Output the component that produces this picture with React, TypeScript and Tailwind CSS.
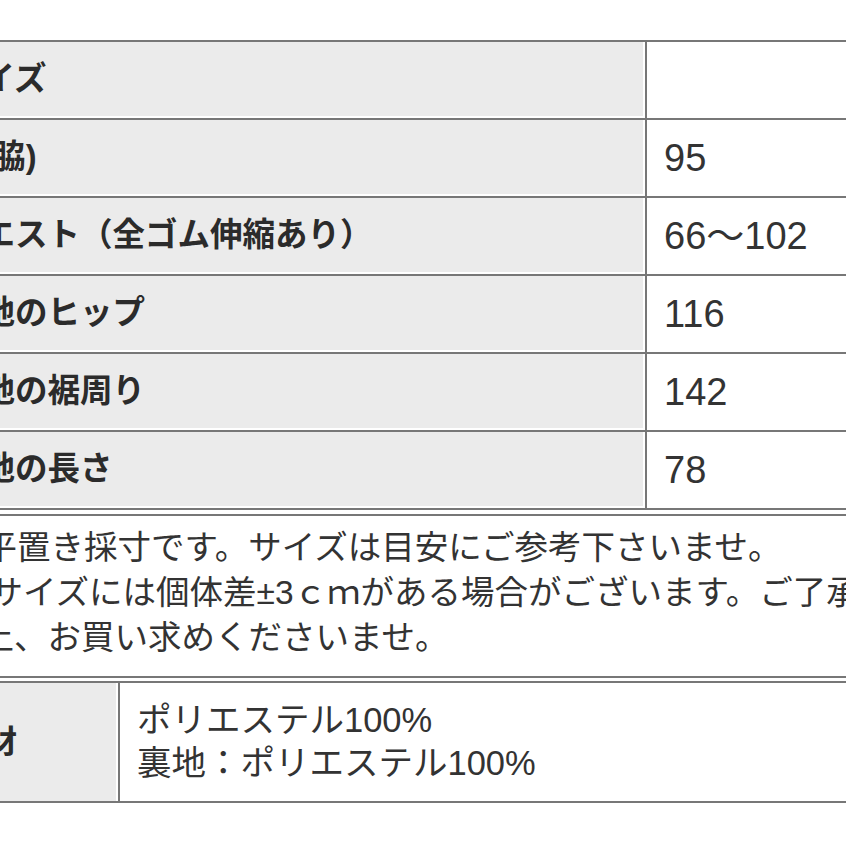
import React from 'react'

const font = { fontFamily: '"Liberation Sans", "Noto Sans CJK JP", sans-serif' }

const SIZE_ROWS = [
  { label: 'サイズ', value: '' },
  { label: '幅(脇)', value: '95' },
  { label: 'ウエスト（全ゴム伸縮あり）', value: '66〜102' },
  { label: '裏地のヒップ', value: '116' },
  { label: '裏地の裾周り', value: '142' },
  { label: '裏地の長さ', value: '78' },
]

export default function App() {
  return (
    <div className="w-[846px] h-[846px] overflow-hidden bg-white text-[#333]" style={font}>
      <div className="pt-[40px]">
        {/* size table */}
        <div className="-ml-[66px] w-[1000px] border-t-2 border-[#777]">
          {SIZE_ROWS.map((row) => (
            <div key={row.label} className="flex h-[78px] border-b-2 border-[#777]">
              <div className="w-[711px] shrink-0 bg-[#ebebeb] border-r-2 border-b-2 border-white pl-4 flex items-center text-[32.5px] font-bold text-[#2b2b2b] whitespace-nowrap">
                {row.label}
              </div>
              <div className="flex-1 border-l-2 border-[#777] pl-[17px] flex items-center text-[38px]">
                {row.value}
              </div>
            </div>
          ))}
          <div className="mt-[4px] border-t-2 border-[#777]" />
        </div>

        {/* notes */}
        <div className="pt-[9px] text-[33.5px] leading-[45px] whitespace-nowrap">
          <div className="-ml-[50px]">※平置き採寸です。サイズは目安にご参考下さいませ。</div>
          <div className="-ml-[44px]">※サイズには個体差±3ｃｍがある場合がございます。ご了承</div>
          <div className="-ml-[53px]">の上、お買い求めくださいませ。</div>
        </div>

        {/* material table */}
        <div className="mt-[16px] -ml-[63px] w-[1000px] border-t-2 border-[#777]">
          <div className="mt-[3px] border-t-2 border-[#777] flex h-[122px] border-b-2">
            <div className="w-[181px] shrink-0 bg-[#ebebeb] border-r-2 border-white pl-4 flex items-center text-[32px] font-bold text-[#2b2b2b] whitespace-nowrap">
              素材
            </div>
            <div className="flex-1 border-l-2 border-[#777] pl-[17px] flex flex-col justify-center text-[34.5px] leading-[43px]">
              <div>ポリエステル100%</div>
              <div>裏地：ポリエステル100%</div>
            </div>
          </div>
        </div>
      </div>
    </div>
  )
}
